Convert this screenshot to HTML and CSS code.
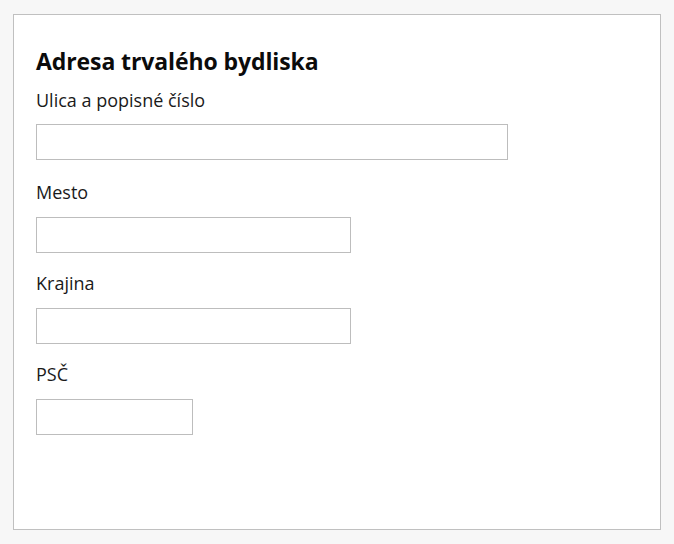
FILE: index.html
```html
<!DOCTYPE html>
<html lang="sk">
<head>
<meta charset="utf-8">
<title>Adresa trvalého bydliska</title>
<link rel="stylesheet" href="styles.css">
</head>
<body>
<main class="page">
  <section class="card">
    <h2 class="title">Adresa trvalého bydliska</h2>
    <div class="field field-first">
      <label class="label" for="ulica">Ulica a popisné číslo</label>
      <input class="input input-l" id="ulica" type="text">
    </div>
    <div class="field">
      <label class="label" for="mesto">Mesto</label>
      <input class="input input-m" id="mesto" type="text">
    </div>
    <div class="field">
      <label class="label" for="krajina">Krajina</label>
      <input class="input input-m" id="krajina" type="text">
    </div>
    <div class="field">
      <label class="label" for="psc">PSČ</label>
      <input class="input input-s" id="psc" type="text">
    </div>
  </section>
</main>
</body>
</html>
```
FILE: styles.css
```css
* { box-sizing: border-box; }
html, body {
  margin: 0;
  padding: 0;
  background: #f7f7f7;
}
body {
  font-family: "Open Sans", "Noto Sans", sans-serif;
  color: #111;
}
.page {
  padding: 14px 13px 14px 13px;
}
.card {
  background: #fff;
  border: 1px solid #c0c0c0;
  height: 516px;
  padding: 30px 22px 0 22px;
}
.title {
  margin: 0 0 11px 0;
  font-size: 23px;
  line-height: 32px;
  font-weight: 700;
  letter-spacing: -0.1px;
  color: #0b0b0b;
}
.field {
  display: flex;
  flex-direction: column;
  align-items: flex-start;
  margin-bottom: 18px;
}
.field-first {
  margin-bottom: 20px;
}
.label {
  font-size: 18px;
  line-height: 24px;
  margin-bottom: 13px;
  color: #1a1a1a;
}
.field-first .label {
  margin-bottom: 12px;
}
.input {
  height: 36px;
  border: 1px solid #bdbdbd;
  border-radius: 0;
  background: #fff;
  padding: 0 8px;
  font: inherit;
  margin: 0;
}
.input-l { width: 472px; }
.input-m { width: 315px; }
.input-s { width: 157px; }
```
